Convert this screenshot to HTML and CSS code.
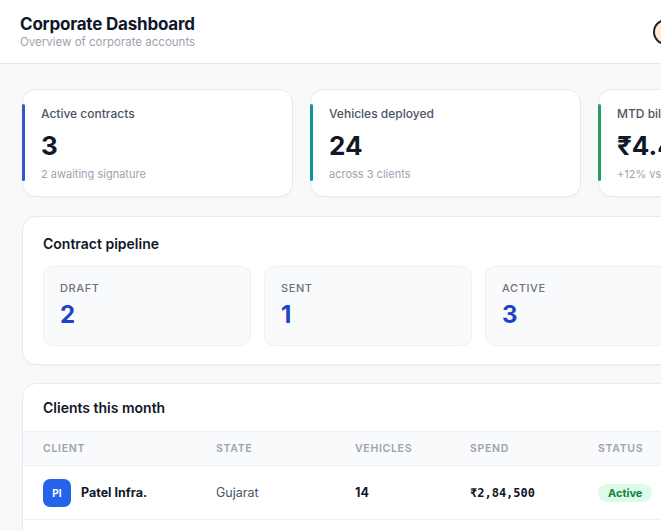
FILE: index.html
```html
<!DOCTYPE html>
<html>
<head>
    <title>Corporate Dashboard</title>
    <meta name="viewport" content="width=device-width, initial-scale=1">
    <link rel="stylesheet" href="styles.css">
</head>
<body>
    <header class="topbar">
        <div class="title-block">
            <h1>Corporate Dashboard</h1>
            <p class="subtitle">Overview of corporate accounts</p>
        </div>
        <div class="user-avatar"></div>
    </header>

    <main class="content">
        <section class="stats">
            <div class="stat-card accent-blue">
                <div class="stat-label">Active contracts</div>
                <div class="stat-value">3</div>
                <div class="stat-sub">2 awaiting signature</div>
            </div>
            <div class="stat-card accent-teal">
                <div class="stat-label">Vehicles deployed</div>
                <div class="stat-value">24</div>
                <div class="stat-sub">across 3 clients</div>
            </div>
            <div class="stat-card accent-green">
                <div class="stat-label">MTD billing</div>
                <div class="stat-value">₹4.42L</div>
                <div class="stat-sub">+12% vs last month</div>
            </div>
            <div class="stat-card accent-amber">
                <div class="stat-label">Outstanding</div>
                <div class="stat-value">₹1.10L</div>
                <div class="stat-sub">1 invoice overdue</div>
            </div>
        </section>

        <section class="panel pipeline">
            <h2 class="panel-title">Contract pipeline</h2>
            <div class="stages">
                <div class="stage">
                    <div class="stage-label">Draft</div>
                    <div class="stage-count">2</div>
                </div>
                <div class="stage">
                    <div class="stage-label">Sent</div>
                    <div class="stage-count">1</div>
                </div>
                <div class="stage">
                    <div class="stage-label">Active</div>
                    <div class="stage-count">3</div>
                </div>
                <div class="stage">
                    <div class="stage-label">Expiring</div>
                    <div class="stage-count">0</div>
                </div>
                <div class="stage">
                    <div class="stage-label">Closed</div>
                    <div class="stage-count">1</div>
                </div>
            </div>
        </section>

        <section class="panel clients">
            <h2 class="panel-title">Clients this month</h2>
            <div class="table">
                <div class="row head">
                    <div>Client</div>
                    <div>State</div>
                    <div>Vehicles</div>
                    <div>Spend</div>
                    <div>Status</div>
                </div>
                <div class="row">
                    <div class="client">
                        <span class="client-avatar">PI</span>
                        <span class="client-name">Patel Infra.</span>
                    </div>
                    <div class="muted">Gujarat</div>
                    <div class="strong">14</div>
                    <div class="money">₹2,84,500</div>
                    <div><span class="pill">Active</span></div>
                </div>
                <div class="row">
                    <div class="client">
                        <span class="client-avatar">SL</span>
                        <span class="client-name">Sharma Logistics</span>
                    </div>
                    <div class="muted">Maharashtra</div>
                    <div class="strong">6</div>
                    <div class="money">₹1,12,000</div>
                    <div><span class="pill">Active</span></div>
                </div>
            </div>
        </section>
    </main>
</body>
</html>
```

FILE: styles.css
```css
html, body {
    overflow: hidden;
}
body {
    margin: 0;
    font-family: Inter, "Noto Sans", sans-serif;
    background: #f8f9fb;
    color: #111827;
}

.topbar {
    display: flex;
    align-items: center;
    height: 63px;
    padding: 0 20px;
    background: #fff;
    border-bottom: 1px solid #e5e7eb;
    min-width: 1140px;
}
.title-block {
    flex: 0 0 633px;
}
.topbar h1 {
    margin: 0;
    font-size: 17px;
    font-weight: 700;
    letter-spacing: -0.2px;
    line-height: 20px;
    color: #0f172a;
}
.subtitle {
    margin: 1px 0 0;
    font-size: 11.5px;
    line-height: 14px;
    color: #9ca3af;
}
.user-avatar {
    width: 22px;
    height: 22px;
    border-radius: 50%;
    border: 2px solid #1f2328;
    background: #fdebdc;
}

.content {
    display: grid;
    gap: 18px;
    padding: 25px 22px;
    width: 1136px;
}

/* stat cards */
.stats {
    display: grid;
    grid-template-columns: repeat(4, 271px);
    gap: 17px;
    margin-bottom: 1px;
}
.stat-card {
    position: relative;
    background: #fff;
    border: 1px solid #e8eaee;
    border-radius: 14px;
    padding: 16px 16px 14px 18px;
    box-shadow: 0 1px 2px rgba(16, 24, 40, 0.03);
}
.stat-card::before {
    content: "";
    position: absolute;
    left: -1px;
    top: 14px;
    bottom: 15px;
    width: 3px;
    border-radius: 2px;
    background: var(--accent);
}
.accent-blue { --accent: #3456d1; }
.accent-teal { --accent: #0f9499; }
.accent-green { --accent: #22a05f; }
.accent-amber { --accent: #e0a21b; }
.stat-label {
    font-size: 12px;
    line-height: 16px;
    font-weight: 500;
    color: #4b5563;
}
.stat-value {
    margin-top: 8px;
    font-size: 26px;
    line-height: 32px;
    font-weight: 700;
    color: #111827;
}
.stat-sub {
    margin-top: 4px;
    font-size: 11px;
    line-height: 16px;
    color: #9ca3af;
}

/* panels */
.panel {
    background: #fff;
    border: 1px solid #e8eaee;
    border-radius: 14px;
    box-shadow: 0 1px 2px rgba(16, 24, 40, 0.03);
}
.panel-title {
    margin: 0;
    font-size: 14px;
    line-height: 18px;
    font-weight: 600;
    color: #111827;
}
.pipeline {
    padding: 18px 20px;
}
.stages {
    display: grid;
    grid-template-columns: repeat(5, 208px);
    gap: 13px;
    margin-top: 13px;
}
.stage {
    background: #f9fafb;
    border: 1px solid #eef0f3;
    border-radius: 10px;
    padding: 14px 16px 15px;
}
.stage-label {
    font-size: 11px;
    line-height: 14px;
    font-weight: 500;
    letter-spacing: 0.6px;
    text-transform: uppercase;
    color: #6b7280;
}
.stage-count {
    margin-top: 5px;
    font-size: 24px;
    line-height: 30px;
    font-weight: 700;
    color: #1d44c4;
}

/* clients table */
.clients .panel-title {
    padding: 15px 20px 0;
}
.table {
    margin-top: 14px;
}
.row {
    display: grid;
    grid-template-columns: 173px 139px 115px 128px 1fr;
    align-items: center;
    padding: 0 20px;
    height: 53px;
    border-top: 1px solid #eef0f3;
    font-size: 12.5px;
}
.row.head {
    height: 33px;
    background: #f9fafb;
    font-size: 10.5px;
    font-weight: 600;
    letter-spacing: 0.7px;
    text-transform: uppercase;
    color: #9ca3af;
}
.client {
    display: flex;
    align-items: center;
    gap: 10px;
}
.client-avatar {
    display: flex;
    align-items: center;
    justify-content: center;
    width: 28px;
    height: 28px;
    border-radius: 7px;
    background: #2563eb;
    color: #fff;
    font-size: 10px;
    font-weight: 700;
}
.client-name {
    font-weight: 700;
    color: #111827;
}
.muted {
    color: #4b5563;
}
.strong {
    font-weight: 700;
}
.money {
    font-family: "DejaVu Sans Mono", "Liberation Mono", monospace;
    font-size: 12px;
    font-weight: 700;
    color: #111827;
}
.pill {
    display: inline-block;
    padding: 2px 10px;
    border-radius: 999px;
    background: #dcfce7;
    color: #15803d;
    font-size: 11px;
    line-height: 14px;
    font-weight: 700;
}
```
